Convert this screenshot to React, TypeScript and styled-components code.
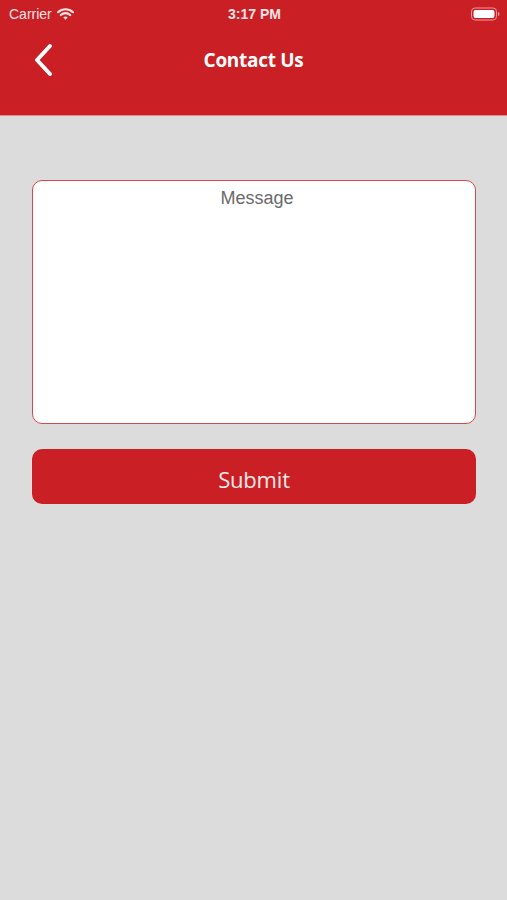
import React from "react";
import styled, { createGlobalStyle } from "styled-components";

const Global = createGlobalStyle`
  html, body { margin: 0; padding: 0; }
  body { background: #dcdcdc; font-family: "Open Sans", "Liberation Sans", sans-serif; }
  * { box-sizing: border-box; }
`;

const Page = styled.div`
  width: 507px;
  min-height: 900px;
  background: #dcdcdc;
  display: flex;
  flex-direction: column;
`;

const Header = styled.header`
  background: #c91f25;
  height: 116px;
  display: flex;
  flex-direction: column;
  border-bottom: 1px solid #e58a8c;
`;

const StatusBar = styled.div`
  height: 28px;
  display: grid;
  grid-template-columns: 1fr auto 1fr;
  align-items: center;
  padding: 0 7px 0 9px;
  color: #fbe3e3;
  font-family: "Liberation Sans", Arial, sans-serif;
  font-size: 14px;
`;

const Carrier = styled.div`
  display: flex;
  align-items: center;
  gap: 5px;
`;

const Time = styled.div`
  font-weight: 600;
  font-size: 14px;
`;

const BatteryWrap = styled.div`
  justify-self: end;
  display: flex;
  align-items: center;
`;

const NavBar = styled.div`
  height: 64px;
  display: grid;
  grid-template-columns: 60px 1fr 60px;
  align-items: center;
`;

const Back = styled.button`
  background: none;
  border: 0;
  padding: 0 0 0 33px;
  display: flex;
  align-items: center;
  cursor: pointer;
`;

const Title = styled.h1`
  margin: 0;
  text-align: center;
  color: #fff;
  font-family: "Open Sans", sans-serif;
  font-weight: 700;
  font-size: 19px;
  letter-spacing: -0.3px;
  padding-bottom: 1px;
`;

const Content = styled.main`
  padding: 64px 31px 0 32px;
  display: flex;
  flex-direction: column;
  gap: 25px;
`;

const MessageBox = styled.textarea`
  height: 244px;
  width: 100%;
  border: 1px solid #d9464b;
  border-radius: 10px;
  background: #fff;
  resize: none;
  padding: 7px 7px 7px 13px;
  text-align: center;
  font-family: "Liberation Sans", Arial, sans-serif;
  font-size: 18px;
  color: #333;
  outline: none;
  &::placeholder { color: #6b6b6b; }
`;

const SubmitButton = styled.button`
  height: 55px;
  width: 100%;
  border: 0;
  border-radius: 10px;
  background: #c91f25;
  color: #fbe9e9;
  font-family: "Open Sans", sans-serif;
  font-size: 22px;
  font-weight: 400;
  letter-spacing: -0.2px;
  padding: 4px 0 0;
  cursor: pointer;
`;

export default function App() {
  return (
    <Page>
      <Global />
      <Header>
        <StatusBar>
          <Carrier>
            Carrier
            <svg width="17" height="12" viewBox="0 0 17 12">
              <path d="M1 4.2 A11 11 0 0 1 16 4.2" stroke="#fbe3e3" strokeWidth="2.2" fill="none" strokeLinecap="round" />
              <path d="M3.8 7 A7 7 0 0 1 13.2 7" stroke="#fbe3e3" strokeWidth="2.2" fill="none" strokeLinecap="round" />
              <path d="M6.3 9.6 L8.5 11.8 L10.7 9.6 A3.2 3.2 0 0 0 6.3 9.6 Z" fill="#fbe3e3" />
            </svg>
          </Carrier>
          <Time>3:17 PM</Time>
          <BatteryWrap>
            <svg width="29" height="14" viewBox="0 0 29 14">
              <rect x="0.5" y="1" width="25" height="12" rx="3.5" fill="none" stroke="#ef9a9c" strokeWidth="1" />
              <rect x="2.5" y="3" width="21" height="8" rx="2" fill="#fff" />
              <path d="M27 5 a1.5 2 0 0 1 0 4 z" fill="#ef9a9c" />
            </svg>
          </BatteryWrap>
        </StatusBar>
        <NavBar>
          <Back aria-label="Back">
            <svg width="22" height="34" viewBox="0 0 22 34">
              <path d="M17 3 L4 17 L17 31" stroke="#fff" strokeWidth="4" fill="none" strokeLinecap="round" strokeLinejoin="round" />
            </svg>
          </Back>
          <Title>Contact Us</Title>
          <div />
        </NavBar>
      </Header>
      <Content>
        <MessageBox placeholder="Message" />
        <SubmitButton>Submit</SubmitButton>
      </Content>
    </Page>
  );
}
